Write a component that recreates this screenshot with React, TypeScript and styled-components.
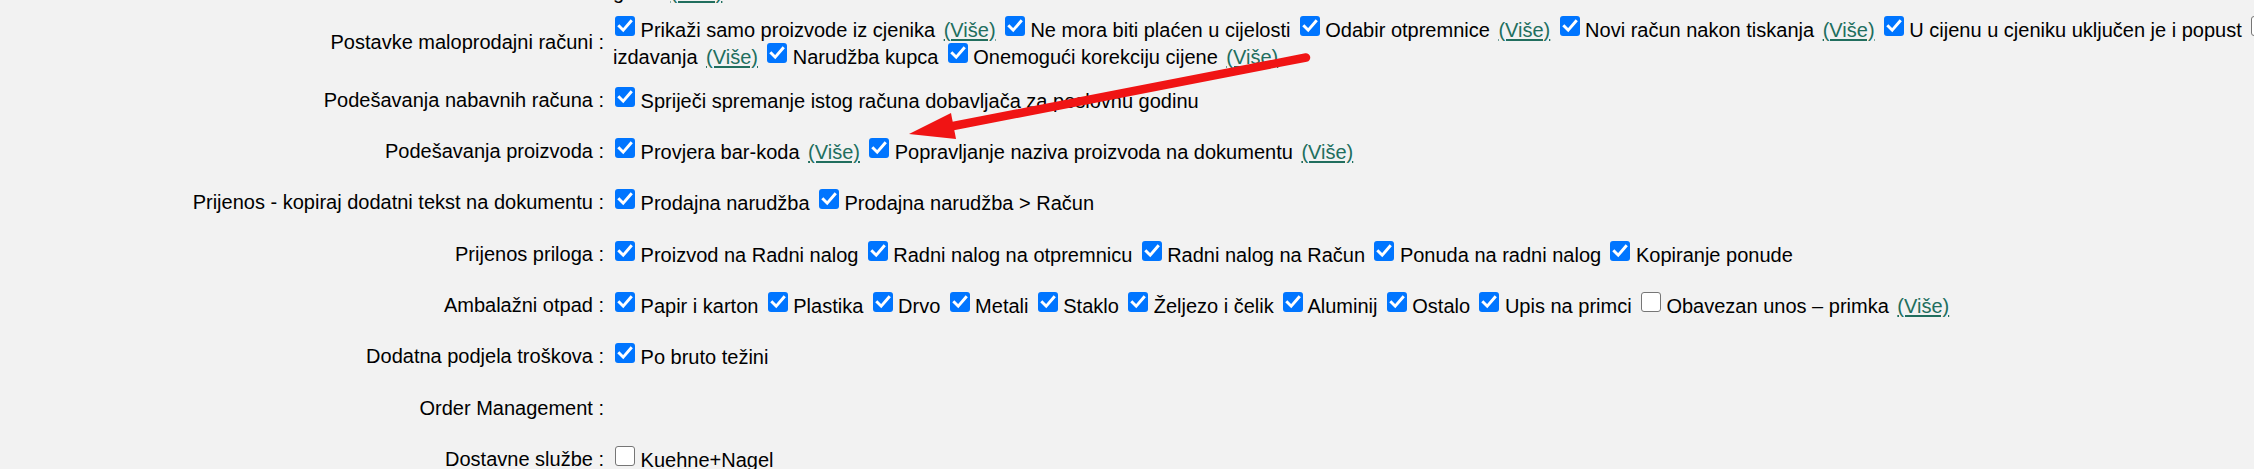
import React from "react";
import styled, { createGlobalStyle } from "styled-components";

const GlobalStyle = createGlobalStyle`
  html, body {
    margin: 0;
    padding: 0;
    background: #f2f2f2;
    overflow: hidden;
  }
  body {
    font-family: "Liberation Sans", Arial, sans-serif;
    font-size: 20px;
    color: #000;
  }
`;

const Page = styled.div`
  position: relative;
  width: 2254px;
  height: 469px;
  overflow: hidden;
`;

const Settings = styled.div`
  display: flex;
  flex-direction: column;
  margin-top: -53.43px;
`;

const Row = styled.div`
  display: grid;
  grid-template-columns: 604px minmax(0, 1fr);
  column-gap: 9px;
  align-items: center;
  min-height: 51.33px;
`;

const Label = styled.div`
  text-align: right;
  line-height: 27px;
  white-space: nowrap;
`;

const Value = styled.div`
  padding: 5px 0;
  line-height: 27px;
  min-width: 0;
`;

const Line = styled.div`
  height: 27px;
  line-height: 27px;
  white-space: nowrap;
`;

const Box = styled.span<{ $checked: boolean; $lead: boolean }>`
  display: inline-block;
  box-sizing: border-box;
  width: 20px;
  height: 20px;
  margin: 0 0 1px ${(p) => (p.$lead ? "2px" : "3.7px")};
  vertical-align: baseline;
  border-radius: 3px;
  overflow: hidden;
  background: ${(p) => (p.$checked ? "#0075ff" : "#ffffff")};
  border: ${(p) => (p.$checked ? "none" : "1.5px solid #767676")};

  svg {
    display: block;
  }
`;

const More = styled.a`
  margin-left: 3px;
  color: #216e5e;
  text-decoration: underline;
  text-decoration-thickness: 1.5px;
  text-underline-offset: 2px;
`;

const Arrow = styled.svg`
  position: absolute;
  left: 0;
  top: 0;
  width: 2254px;
  height: 469px;
  pointer-events: none;
`;

type Item = {
  text: string;
  checked?: boolean;
  more?: boolean;
  continued?: boolean;
};

type SettingRow = {
  label: string;
  lines: Item[][];
};

const rows: SettingRow[] = [
  {
    label: "Postavke računa :",
    lines: [
      [
        { text: "Ispis dokumenata", checked: true, more: true },
        { text: "Automatski izračun rabata", checked: true },
      ],
      [{ text: "gotov", continued: true, more: true }],
    ],
  },
  {
    label: "Postavke maloprodajni računi :",
    lines: [
      [
        { text: "Prikaži samo proizvode iz cjenika", checked: true, more: true },
        { text: "Ne mora biti plaćen u cijelosti", checked: true },
        { text: "Odabir otpremnice", checked: true, more: true },
        { text: "Novi račun nakon tiskanja", checked: true, more: true },
        { text: "U cijenu u cjeniku uključen je i popust", checked: true },
        { text: "Datum računa jednak datumu", checked: false },
      ],
      [
        { text: "izdavanja", continued: true, more: true },
        { text: "Narudžba kupca", checked: true },
        { text: "Onemogući korekciju cijene", checked: true, more: true },
      ],
    ],
  },
  {
    label: "Podešavanja nabavnih računa :",
    lines: [
      [
        {
          text: "Spriječi spremanje istog računa dobavljača za poslovnu godinu",
          checked: true,
        },
      ],
    ],
  },
  {
    label: "Podešavanja proizvoda :",
    lines: [
      [
        { text: "Provjera bar-koda", checked: true, more: true },
        {
          text: "Popravljanje naziva proizvoda na dokumentu",
          checked: true,
          more: true,
        },
      ],
    ],
  },
  {
    label: "Prijenos - kopiraj dodatni tekst na dokumentu :",
    lines: [
      [
        { text: "Prodajna narudžba", checked: true },
        { text: "Prodajna narudžba > Račun", checked: true },
      ],
    ],
  },
  {
    label: "Prijenos priloga :",
    lines: [
      [
        { text: "Proizvod na Radni nalog", checked: true },
        { text: "Radni nalog na otpremnicu", checked: true },
        { text: "Radni nalog na Račun", checked: true },
        { text: "Ponuda na radni nalog", checked: true },
        { text: "Kopiranje ponude", checked: true },
      ],
    ],
  },
  {
    label: "Ambalažni otpad :",
    lines: [
      [
        { text: "Papir i karton", checked: true },
        { text: "Plastika", checked: true },
        { text: "Drvo", checked: true },
        { text: "Metali", checked: true },
        { text: "Staklo", checked: true },
        { text: "Željezo i čelik", checked: true },
        { text: "Aluminij", checked: true },
        { text: "Ostalo", checked: true },
        { text: "Upis na primci", checked: true },
        { text: "Obavezan unos – primka", checked: false, more: true },
      ],
    ],
  },
  {
    label: "Dodatna podjela troškova :",
    lines: [[{ text: "Po bruto težini", checked: true }]],
  },
  {
    label: "Order Management :",
    lines: [],
  },
  {
    label: "Dostavne službe :",
    lines: [[{ text: "Kuehne+Nagel", checked: false }]],
  },
];

function CheckBox({ checked, lead }: { checked: boolean; lead: boolean }) {
  return (
    <Box $checked={checked} $lead={lead} role="checkbox" aria-checked={checked}>
      {checked && (
        <svg width="20" height="20" viewBox="0 0 20 20">
          <path
            d="M4.3 10.2 L8.2 14.2 L15.8 5.4"
            fill="none"
            stroke="#ffffff"
            strokeWidth="2.9"
            strokeLinecap="square"
            strokeLinejoin="miter"
          />
        </svg>
      )}
    </Box>
  );
}

function Option({ item, first }: { item: Item; first: boolean }) {
  return (
    <>
      {!first && " "}
      {!item.continued && (
        <>
          <CheckBox checked={!!item.checked} lead={first} />{" "}
        </>
      )}
      {item.text}
      {item.more && (
        <>
          {" "}
          <More href="#">(Više)</More>
        </>
      )}
    </>
  );
}

export default function App() {
  return (
    <>
      <GlobalStyle />
      <Page>
        <Settings>
          {rows.map((row, ri) => (
            <Row key={ri}>
              <Label>{row.label}</Label>
              <Value>
                {row.lines.map((line, li) => (
                  <Line key={li}>
                    {line.map((item, ii) => (
                      <Option key={ii} item={item} first={ii === 0} />
                    ))}
                  </Line>
                ))}
              </Value>
            </Row>
          ))}
        </Settings>
        <Arrow viewBox="0 0 2254 469">
          <line
            x1="1306"
            y1="57.5"
            x2="948"
            y2="127"
            stroke="#f01414"
            strokeWidth="8.5"
            strokeLinecap="round"
          />
          <polygon points="909,134 951,113 956,139" fill="#f01414" />
        </Arrow>
      </Page>
    </>
  );
}
